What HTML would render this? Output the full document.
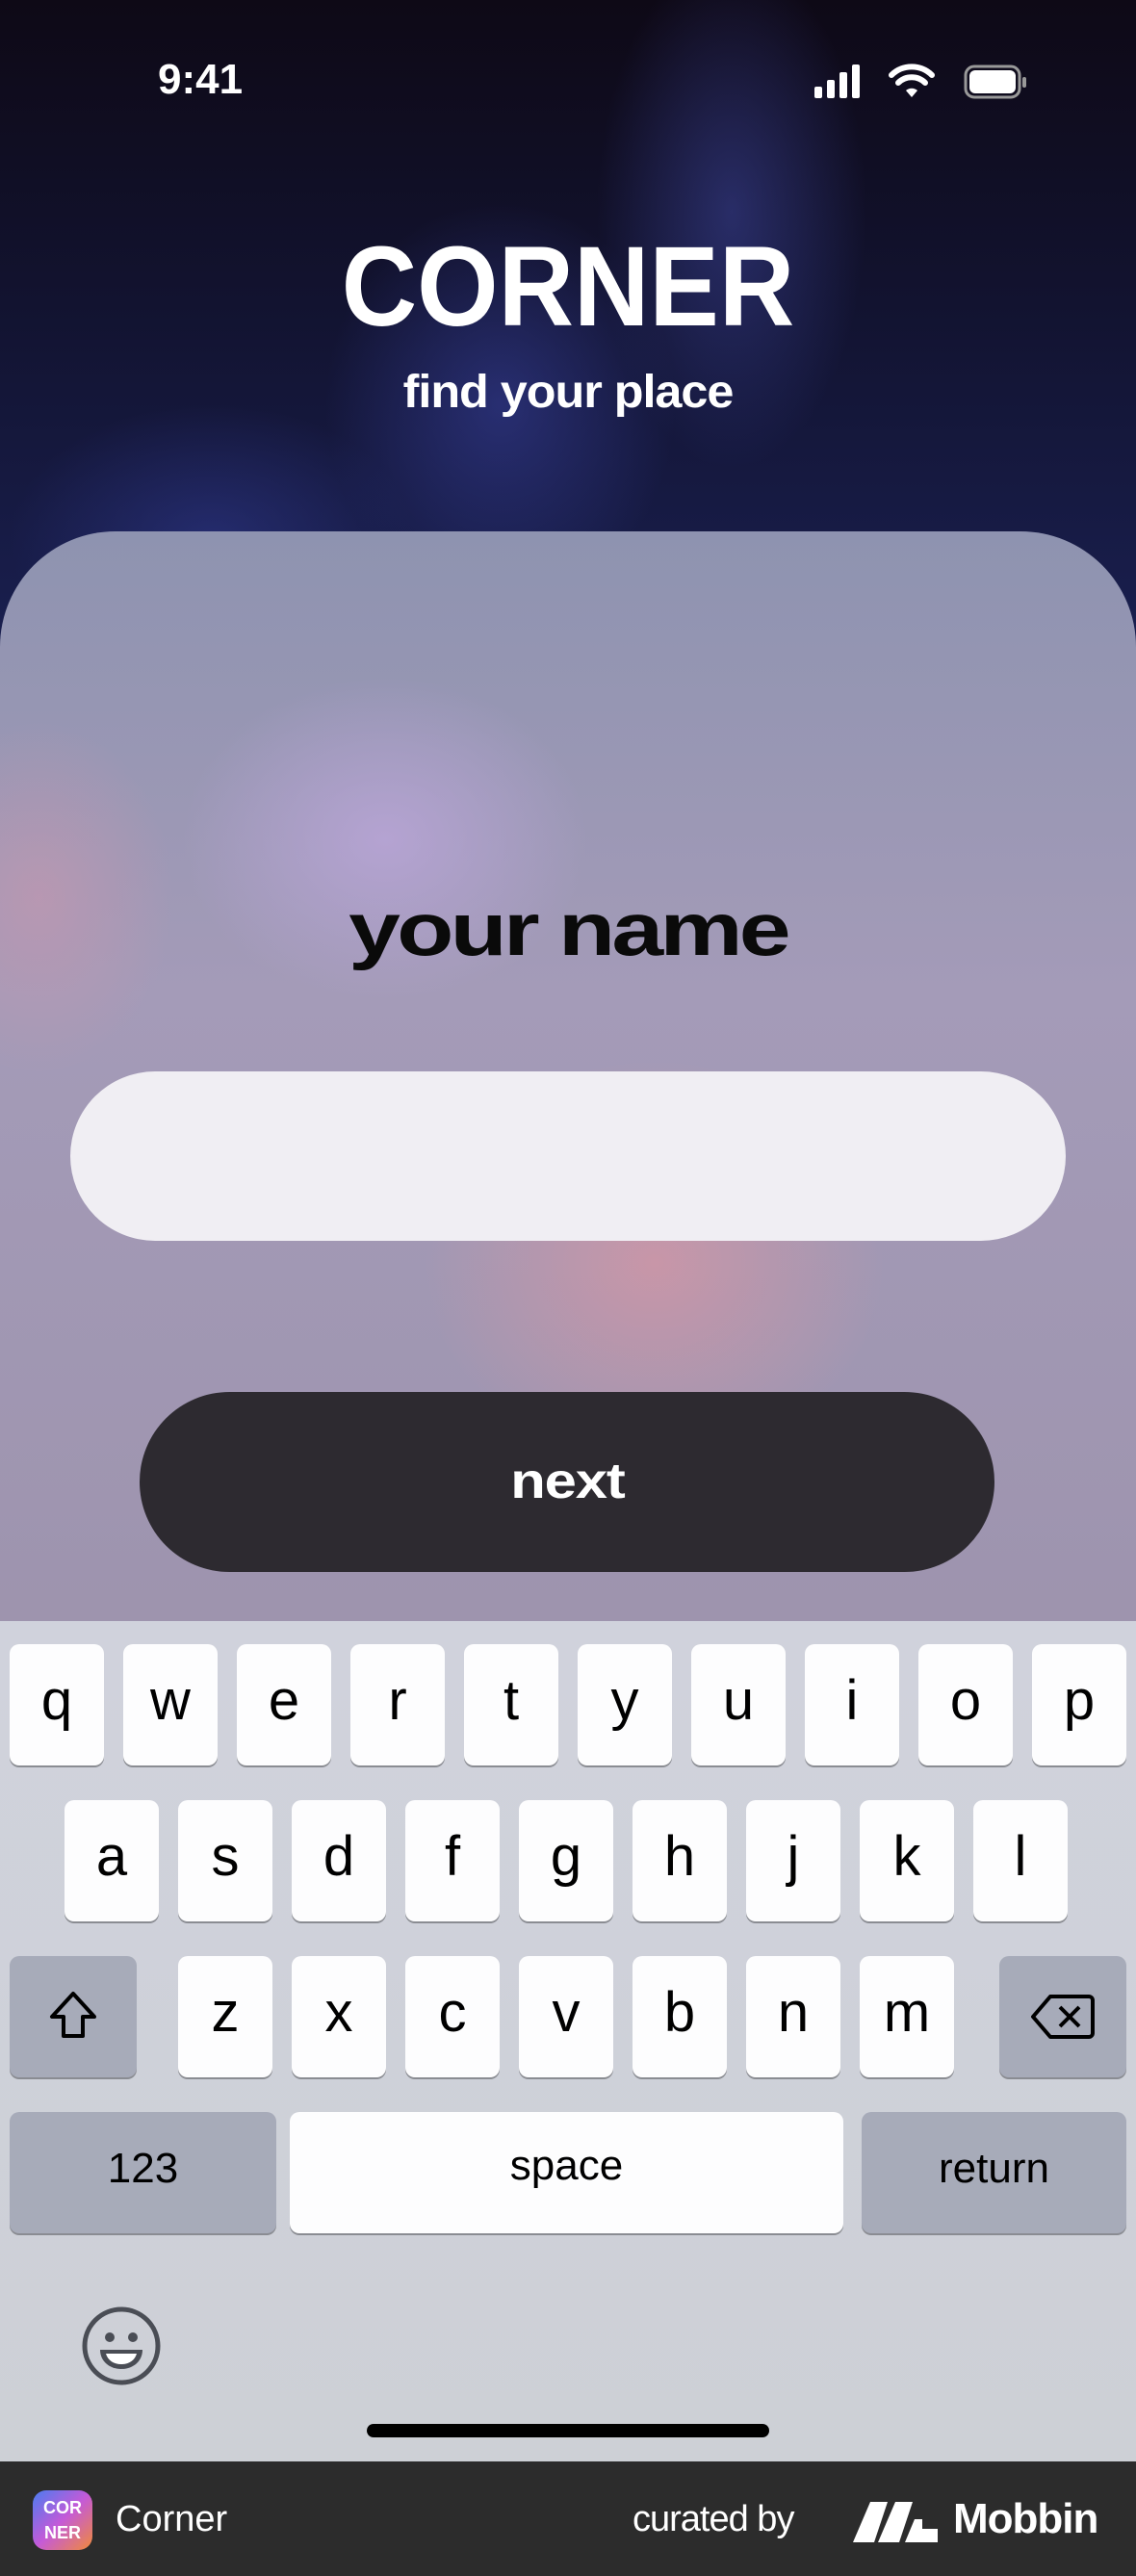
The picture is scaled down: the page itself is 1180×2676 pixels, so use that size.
<!DOCTYPE html>
<html><head><meta charset="utf-8"><style>
*{margin:0;padding:0;box-sizing:border-box}
body{width:1180px;height:2676px;position:relative;overflow:hidden;font-family:"Liberation Sans",sans-serif;background:#0d0a1c}
.abs{position:absolute}
.top{left:0;top:0;width:1180px;height:700px;background:
radial-gradient(ellipse 200px 380px at 760px 220px,rgba(70,80,180,.45),transparent 70%),
radial-gradient(ellipse 260px 300px at 520px 420px,rgba(60,70,170,.5),transparent 70%),
radial-gradient(ellipse 300px 200px at 220px 560px,rgba(50,60,150,.5),transparent 70%),
linear-gradient(180deg,#0e0916 0%,#121330 45%,#1a2052 100%)}
.card{left:0;top:552px;width:1180px;height:1200px;border-radius:120px 120px 0 0;background:
radial-gradient(ellipse 300px 240px at 400px 320px,rgba(185,165,215,.85),transparent 70%),
radial-gradient(ellipse 340px 300px at 680px 760px,rgba(210,150,165,.8),transparent 70%),
radial-gradient(ellipse 200px 260px at 40px 380px,rgba(200,150,175,.6),transparent 70%),
linear-gradient(180deg,#8e93b0 0%,#a49bb8 40%,#9d93ad 100%)}
.key{position:absolute;background:#fdfdfe;border-radius:10px;box-shadow:0 2px 0 #8a8c92;font-size:58px;color:#000;text-align:center;line-height:118px;height:126px}
.gk{background:#a7abb9}
</style></head><body>
<div class="abs top"></div>
<div class="abs" style="left:164px;top:58px;color:#fff;font-size:44px;font-weight:bold;">9:41</div>
<svg class="abs" style="left:846px;top:66px" width="230" height="40" viewBox="0 0 230 40">
<rect x="0" y="24" width="8" height="12" rx="2" fill="#fff"/><rect x="13" y="17" width="8" height="19" rx="2" fill="#fff"/><rect x="26" y="9" width="8" height="27" rx="2" fill="#fff"/><rect x="39" y="1" width="8" height="35" rx="2" fill="#fff"/>
<path d="M80 12a30 30 0 0 1 42 0" stroke="#fff" stroke-width="6" fill="none" stroke-linecap="round"/><path d="M87 20a20 20 0 0 1 28 0" stroke="#fff" stroke-width="6" fill="none" stroke-linecap="round"/><path d="M95 28l6 7 6-7a9 9 0 0 0-12 0z" fill="#fff"/>
<rect x="157" y="3" width="56" height="32" rx="9" stroke="#999" stroke-width="3" fill="none"/><rect x="161" y="7" width="48" height="24" rx="6" fill="#fff"/><rect x="216" y="14" width="4" height="11" rx="2" fill="#999"/>
</svg>
<div class="abs" style="left:330px;top:238px;width:520px;text-align:center;color:#fff;font-size:118px;font-weight:900;letter-spacing:0px;line-height:120px;transform:scaleX(.92)">CORNER</div>
<div class="abs" style="left:340px;top:380px;width:500px;text-align:center;color:#fff;font-size:48px;font-weight:bold;letter-spacing:-1px;transform:scaleX(1.05)">find your place</div>
<div class="abs card"></div>
<div class="abs" style="left:300px;top:920px;width:580px;text-align:center;color:#0a0a0a;font-size:78px;font-weight:bold;letter-spacing:-3px;transform:scaleX(1.24)">your name</div>
<div class="abs" style="left:73px;top:1113px;width:1034px;height:176px;border-radius:88px;background:#f0eef3"></div>
<div class="abs" style="left:145px;top:1446px;width:888px;height:187px;border-radius:94px;background:#2d2a30;color:#fff;font-size:52px;font-weight:bold;text-align:center;line-height:187px;letter-spacing:-1px;transform-origin:center"><span style="display:inline-block;transform:scaleX(1.15)">next</span></div>
<div class="abs" style="left:0;top:1684px;width:1180px;height:874px;background:linear-gradient(180deg,#d0d2dc,#cdd0d6)"></div>
<div class="key" style="left:10px;top:1708px;width:98px">q</div><div class="key" style="left:128px;top:1708px;width:98px">w</div><div class="key" style="left:246px;top:1708px;width:98px">e</div><div class="key" style="left:364px;top:1708px;width:98px">r</div><div class="key" style="left:482px;top:1708px;width:98px">t</div><div class="key" style="left:600px;top:1708px;width:98px">y</div><div class="key" style="left:718px;top:1708px;width:98px">u</div><div class="key" style="left:836px;top:1708px;width:98px">i</div><div class="key" style="left:954px;top:1708px;width:98px">o</div><div class="key" style="left:1072px;top:1708px;width:98px">p</div>
<div class="key" style="left:67px;top:1870px;width:98px">a</div><div class="key" style="left:185px;top:1870px;width:98px">s</div><div class="key" style="left:303px;top:1870px;width:98px">d</div><div class="key" style="left:421px;top:1870px;width:98px">f</div><div class="key" style="left:539px;top:1870px;width:98px">g</div><div class="key" style="left:657px;top:1870px;width:98px">h</div><div class="key" style="left:775px;top:1870px;width:98px">j</div><div class="key" style="left:893px;top:1870px;width:98px">k</div><div class="key" style="left:1011px;top:1870px;width:98px">l</div>
<div class="key gk" style="left:10px;top:2032px;width:132px"><svg width="60" height="60" viewBox="0 0 60 60" style="margin-top:33px"><path d="M30 6L8 30h12v20h20V30h12z" fill="none" stroke="#000" stroke-width="4" stroke-linejoin="round"/></svg></div>
<div class="key" style="left:185px;top:2032px;width:98px">z</div><div class="key" style="left:303px;top:2032px;width:98px">x</div><div class="key" style="left:421px;top:2032px;width:98px">c</div><div class="key" style="left:539px;top:2032px;width:98px">v</div><div class="key" style="left:657px;top:2032px;width:98px">b</div><div class="key" style="left:775px;top:2032px;width:98px">n</div><div class="key" style="left:893px;top:2032px;width:98px">m</div>
<div class="key gk" style="left:1038px;top:2032px;width:132px"><svg width="70" height="50" viewBox="0 0 70 50" style="margin-top:38px"><path d="M22 4h40a4 4 0 0 1 4 4v34a4 4 0 0 1-4 4H22L4 25z" fill="none" stroke="#000" stroke-width="4" stroke-linejoin="round"/><path d="M32 15l20 20M52 15L32 35" stroke="#000" stroke-width="4"/></svg></div>
<div class="key gk" style="left:10px;top:2194px;width:277px;font-size:44px">123</div>
<div class="key" style="left:301px;top:2194px;width:575px;font-size:44px;line-height:112px">space</div>
<div class="key gk" style="left:895px;top:2194px;width:275px;font-size:44px">return</div>
<svg class="abs" style="left:84px;top:2395px" width="84" height="84" viewBox="0 0 84 84"><circle cx="42" cy="42" r="38" fill="none" stroke="#4a4d55" stroke-width="5"/><circle cx="30" cy="33" r="5" fill="#4a4d55"/><circle cx="54" cy="33" r="5" fill="#4a4d55"/><path d="M20 46h44c0 12-10 20-22 20s-22-8-22-20z" fill="#4a4d55"/><path d="M26 50h32c-2 7-8 11-16 11s-14-4-16-11z" fill="#fff"/></svg>
<div class="abs" style="left:381px;top:2518px;width:418px;height:14px;border-radius:7px;background:#000"></div>
<div class="abs" style="left:0;top:2557px;width:1180px;height:119px;background:#2c2c2c"></div>
<div class="abs" style="left:34px;top:2587px;width:62px;height:62px;border-radius:14px;background:linear-gradient(135deg,#4a7cf0,#c45ad8 50%,#f08a3a);color:#fff;font-size:18px;font-weight:900;text-align:center;line-height:26px;padding-top:5px">COR<br>NER</div>
<div class="abs" style="left:120px;top:2596px;color:#fff;font-size:38px">Corner</div>
<div class="abs" style="left:657px;top:2596px;color:#fff;font-size:38px;letter-spacing:-1px">curated by</div>
<svg class="abs" style="left:886px;top:2595px" width="88" height="46" viewBox="0 0 88 46"><path d="M0 46L18 4h18L22 46zM26 46L44 4h18L48 46zM54 46l10-24 8 0 0 10h16v14z" fill="#fff"/></svg>
<div class="abs" style="left:990px;top:2592px;color:#fff;font-size:44px;font-weight:bold;letter-spacing:-1px">Mobbin</div>
</body></html>
